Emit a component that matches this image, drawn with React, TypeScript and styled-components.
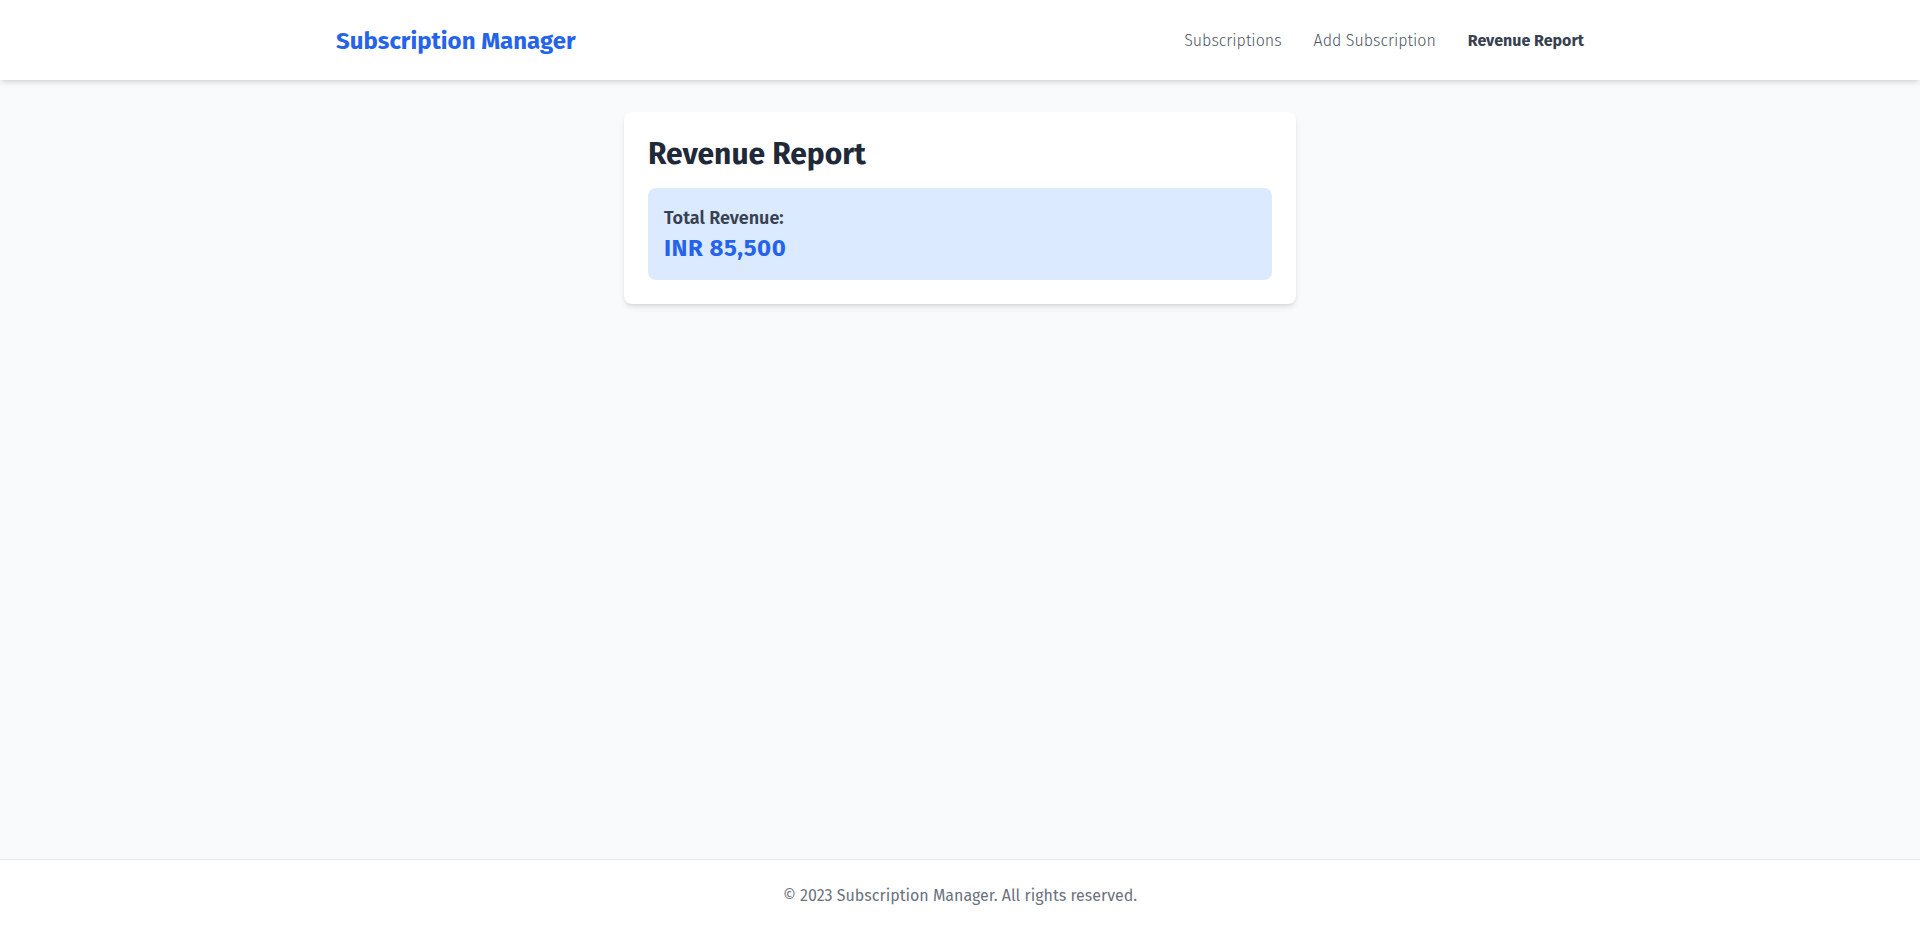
import React from "react";
import styled, { createGlobalStyle } from "styled-components";

const Global = createGlobalStyle`
  * { box-sizing: border-box; }
  html, body { margin: 0; padding: 0; }
  body {
    font-family: "Fira Sans", "Open Sans", "Noto Sans", sans-serif;
    background: #f9fafb;
    color: #1f2937;
  }
`;

const Page = styled.div`
  min-height: 100vh;
  display: flex;
  flex-direction: column;
  background: #f9fafb;
`;

const Header = styled.header`
  background: #ffffff;
  box-shadow: 0 4px 6px -1px rgba(0, 0, 0, 0.1), 0 2px 4px -2px rgba(0, 0, 0, 0.1);
  position: relative;
  z-index: 1;
`;

const HeaderInner = styled.div`
  max-width: 1280px;
  margin: 0 auto;
  padding: 25px 16px 23px;
  display: flex;
  align-items: center;
  justify-content: space-between;
`;

const Logo = styled.a`
  font-size: 24px;
  line-height: 32px;
  font-weight: 700;
  color: #2563eb;
  text-decoration: none;
`;

const Nav = styled.nav`
  display: flex;
  align-items: center;
  gap: 32px;
`;

const NavLink = styled.a<{ $active?: boolean }>`
  font-size: 16px;
  line-height: 24px;
  color: ${(p) => (p.$active ? "#374151" : "#4b5563")};
  font-weight: ${(p) => (p.$active ? 700 : 300)};
  text-decoration: none;
`;

const Main = styled.main`
  flex: 1;
  padding: 32px 16px;
`;

const Card = styled.section`
  max-width: 672px;
  margin: 0 auto;
  background: #ffffff;
  border-radius: 8px;
  box-shadow: 0 4px 6px -1px rgba(0, 0, 0, 0.1), 0 2px 4px -2px rgba(0, 0, 0, 0.1);
  padding: 24px;
`;

const Title = styled.h1`
  margin: 0 0 16px;
  font-size: 30px;
  line-height: 36px;
  font-weight: 700;
  color: #1f2937;
`;

const TotalBox = styled.div`
  background: #dbeafe;
  border-radius: 8px;
  padding: 16px;
`;

const TotalLabel = styled.p`
  margin: 0;
  font-size: 18px;
  line-height: 28px;
  font-weight: 600;
  color: #374151;
`;

const TotalValue = styled.p`
  margin: 0;
  font-size: 24px;
  line-height: 32px;
  font-weight: 700;
  letter-spacing: 0.5px;
  color: #2563eb;
`;

const Footer = styled.footer`
  background: #ffffff;
  border-top: 1px solid #e5e7eb;
  padding: 24px 16px;
  text-align: center;
`;

const FooterText = styled.p`
  margin: 0;
  font-size: 16px;
  line-height: 24px;
  color: #6b7280;
`;

export default function App() {
  return (
    <>
      <Global />
      <Page>
        <Header>
          <HeaderInner>
            <Logo href="#">Subscription Manager</Logo>
            <Nav>
              <NavLink href="#">Subscriptions</NavLink>
              <NavLink href="#">Add Subscription</NavLink>
              <NavLink href="#" $active>
                Revenue Report
              </NavLink>
            </Nav>
          </HeaderInner>
        </Header>
        <Main>
          <Card>
            <Title>Revenue Report</Title>
            <TotalBox>
              <TotalLabel>Total Revenue:</TotalLabel>
              <TotalValue>INR 85,500</TotalValue>
            </TotalBox>
          </Card>
        </Main>
        <Footer>
          <FooterText>© 2023 Subscription Manager. All rights reserved.</FooterText>
        </Footer>
      </Page>
    </>
  );
}
